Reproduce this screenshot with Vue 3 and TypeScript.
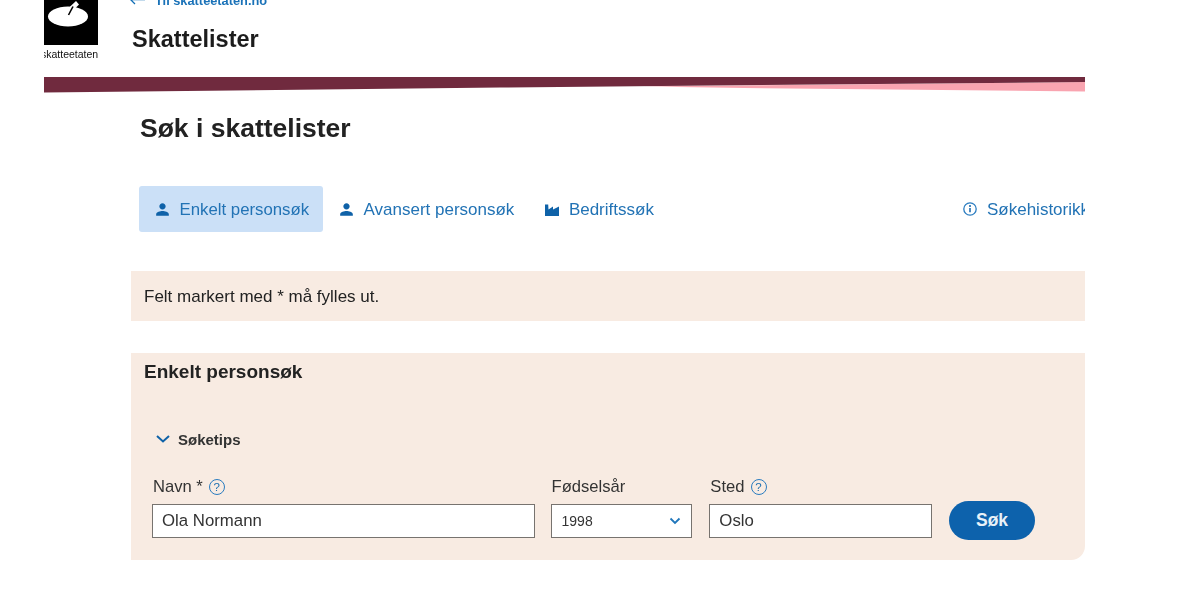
<script setup lang="ts">
interface Tab { label: string; icon: 'person' | 'factory'; active?: boolean }
const tabs: Tab[] = [
  { label: 'Enkelt personsøk', icon: 'person', active: true },
  { label: 'Avansert personsøk', icon: 'person' },
  { label: 'Bedriftssøk', icon: 'factory' },
]
</script>

<template>
  <div class="page">
    <header class="head">
      <div class="logo">
        <svg class="mark" viewBox="0 0 54 45" width="54" height="45">
          <rect width="54" height="45" fill="#000" />
          <ellipse cx="24" cy="16.500" rx="20" ry="10" fill="#fff" />
          <path d="M24 8.500 32 1l3 3.500-5 5z" fill="#fff" />
          <path d="M24.500 15 29 6.500" stroke="#000" stroke-width="1.600" fill="none" />
        </svg>
        <span class="logo-text">skatteetaten</span>
      </div>
      <div class="head-text">
        <a class="back">
          <svg width="18" height="12" viewBox="0 0 18 12"><path d="M6 1 1.500 5.500 6 10M2 5.500h14" fill="none" stroke="#0f6db5" stroke-width="1.300" /></svg>
          Til skatteetaten.no
        </a>
        <div class="app-title">Skattelister</div>
      </div>
    </header>

    <svg class="band" viewBox="0 0 1041 16" width="1041" height="16">
      <polygon points="600,9.500 1041,5 1041,14.500 700,11" fill="#f9a4b0" />
      <polygon points="0,0 1041,0 1041,5 456,10.500 0,15.500" fill="#702a3e" />
    </svg>

    <main class="main">
      <h1 class="title">Søk i skattelister</h1>

      <nav class="tabs">
        <a v-for="tab in tabs" :key="tab.label" class="tab" :class="{ active: tab.active }">
          <svg v-if="tab.icon === 'person'" class="ico" viewBox="0 0 24 24" width="19" height="19">
            <path d="M12 12c2.210 0 4-1.790 4-4s-1.790-4-4-4-4 1.790-4 4 1.790 4 4 4zm0 2c-2.670 0-8 1.340-8 4v2h16v-2c0-2.660-5.330-4-8-4z" fill="#0f62a8" />
          </svg>
          <svg v-else class="ico" viewBox="0 0 19 19" width="19" height="19">
            <path d="M3 16V4.500h3.200l.3 5L11 6.500v3l6-3V16z" fill="#0f62a8" />
          </svg>
          <span class="tab-label">{{ tab.label }}</span>
        </a>
        <a class="tab history">
          <svg class="ico" viewBox="0 0 16 16" width="16" height="16">
            <circle cx="8" cy="8" r="6.200" fill="none" stroke="#2a7cc0" stroke-width="1.300" />
            <path d="M8 7v4.200" stroke="#0f62a8" stroke-width="1.500" />
            <circle cx="8" cy="5" r="1" fill="#0f62a8" />
          </svg>
          <span class="tab-label">Søkehistorikk</span>
        </a>
      </nav>

      <section class="note">Felt markert med * må fylles ut.</section>

      <section class="panel">
        <h2 class="panel-title">Enkelt personsøk</h2>
        <div class="tips">
          <svg width="16" height="10" viewBox="0 0 16 10"><path d="M2 2l6 5.500L14 2" fill="none" stroke="#0f62a8" stroke-width="2" /></svg>
          <span>Søketips</span>
        </div>
        <form class="fields" @submit.prevent>
          <div class="field name">
            <label class="lab">Navn *
              <span class="help">?</span>
            </label>
            <input class="inp" value="Ola Normann" />
          </div>
          <div class="field year">
            <label class="lab">Fødselsår</label>
            <div class="sel">
              <span>1998</span>
              <svg width="12" height="8" viewBox="0 0 12 8"><path d="M1.500 1.500 6 6l4.500-4.500" fill="none" stroke="#1f76bb" stroke-width="1.800" /></svg>
            </div>
          </div>
          <div class="field place">
            <label class="lab">Sted
              <span class="help">?</span>
            </label>
            <input class="inp" value="Oslo" />
          </div>
          <button class="btn" type="submit">Søk</button>
        </form>
      </section>
    </main>
  </div>
</template>

<style>
html, body { margin: 0; background: #fff; }
</style>

<style scoped>
.page {
  width: 1085px;
  height: 560px;
  overflow: hidden;
  padding-left: 44px;
  box-sizing: border-box;
  font-family: "Liberation Sans", Arial, sans-serif;
  color: #222;
  filter: blur(0.45px);
}
.head { display: flex; height: 77px; }
.logo { width: 54px; display: flex; flex-direction: column; overflow: hidden; }
.mark { display: block; flex: none; }
.logo-text { font-size: 10.500px; line-height: 12px; margin-top: 3px; margin-left: -3px; color: #111; white-space: nowrap; }
.head-text { margin-left: 34px; margin-top: -8px; }
.back { display: flex; align-items: center; gap: 8px; height: 16px; font-size: 12.800px; font-weight: 700; color: #1a72b8; margin-left: -3px; }
.app-title { font-size: 23.500px; font-weight: 700; line-height: 26px; margin-top: 18px; color: #1c1c1c; }
.band { display: block; margin-bottom: -1px; }
.main { padding-left: 87px; }
.title { margin: 21px 0 0 9px; font-size: 26.500px; line-height: 30px; font-weight: 700; color: #222; }
.tabs { display: flex; align-items: center; margin: 43px 0 0 8px; height: 46px; }
.tab {
  display: flex; align-items: center; gap: 8px;
  height: 46px; padding: 0 14px 0 13.500px; box-sizing: border-box;
  font-size: 17px; color: #2273b5; border-radius: 3px; white-space: nowrap;
}
.tab-label { padding-top: 1px; }
.tab.active { background: #cbe0f7; width: 184px; font-size: 16.800px; }
.history { margin-left: auto; margin-right: -18px; gap: 9px; }
.ico { flex: none; }
.note {
  margin-top: 39px; height: 50px; padding: 1px 0 0 13px; box-sizing: border-box;
  display: flex; align-items: center;
  background: #f8ebe2; font-size: 17px; color: #222;
}
.panel {
  margin-top: 32px; height: 207px; box-sizing: border-box;
  padding: 8px 50px 0 13px;
  background: #f8ebe2; border-bottom-right-radius: 14px;
}
.panel-title { margin: 0; font-size: 19px; line-height: 21px; font-weight: 700; color: #222; }
.tips { display: flex; align-items: center; gap: 7px; margin: 48px 0 0 11px; height: 18px; font-size: 15px; font-weight: 700; color: #333; }
.fields { display: flex; align-items: flex-end; margin: 27px 0 0 8px; }
.field { display: flex; flex-direction: column; }
.name { width: 383px; }
.year { width: 142px; margin-left: 16px; }
.place { width: 223px; margin-left: 17px; }
.lab { display: flex; align-items: center; gap: 5px; height: 24px; font-size: 16.600px; color: #333; margin-left: 1px; }
.help {
  width: 14px; height: 14px; border: 1.300px solid #2a7cc0; border-radius: 50%;
  display: flex; align-items: center; justify-content: center;
  font-size: 11.500px; color: #1a6eb0; margin-left: 1px;
}
.inp, .sel {
  height: 34px; box-sizing: border-box; width: 100%;
  border: 1px solid #77736f; background: #fff; margin-top: 5px;
  font-family: inherit; color: #333;
}
.inp { padding: 0 9px; font-size: 16.800px; }
.sel { display: flex; align-items: center; justify-content: space-between; padding: 0 10px; font-size: 14px; }
.btn {
  width: 86px; height: 39px; margin: 0 0 -2px 17px; border: none; border-radius: 20px;
  background: #0d62ac; color: #e8f1f8; font: 700 17.500px "Liberation Sans", Arial, sans-serif;
}
</style>
